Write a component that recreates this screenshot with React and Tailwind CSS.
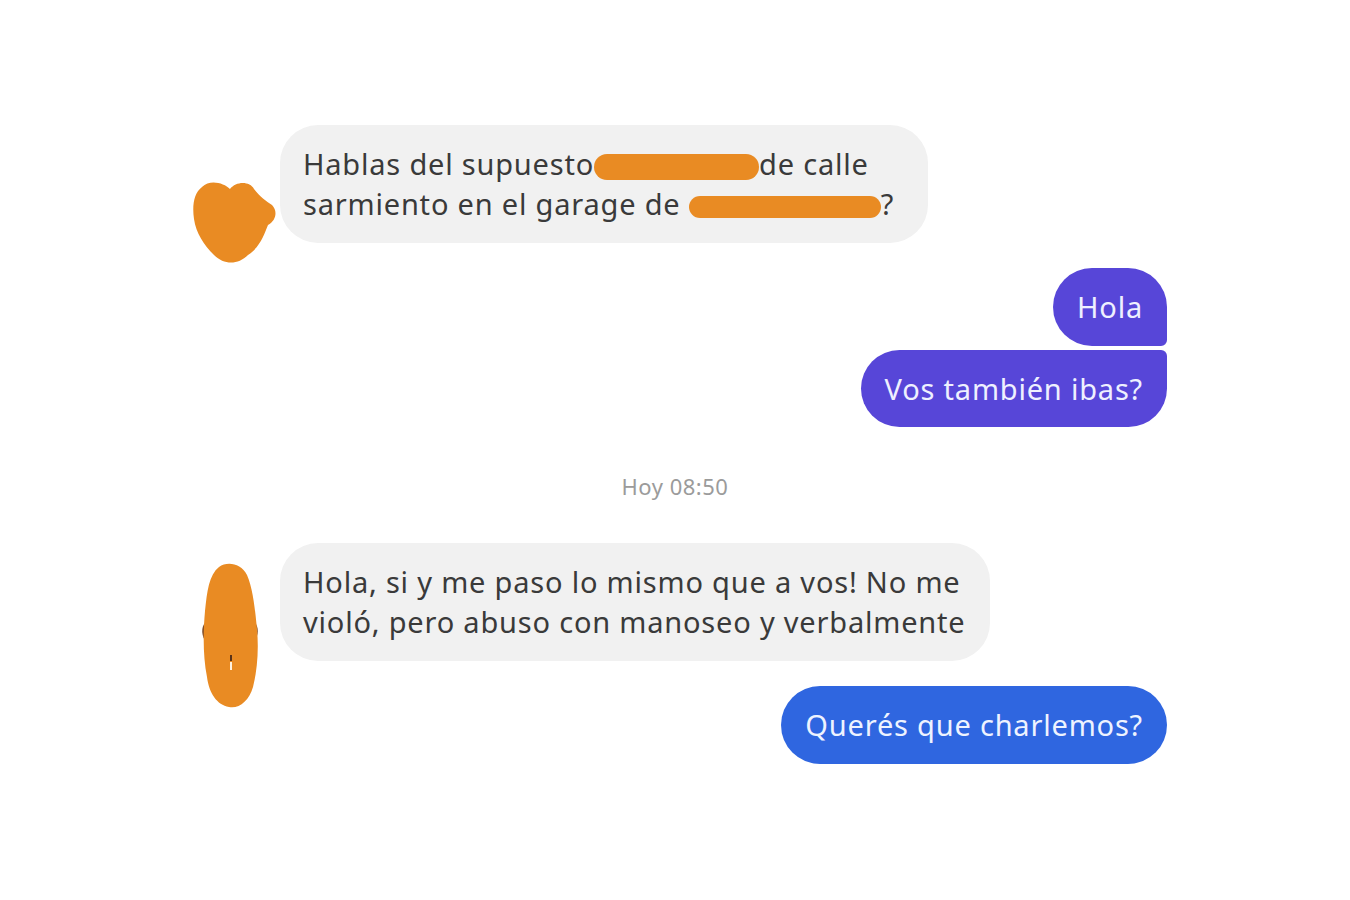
import React from "react";

const orange = "#e98b23";

function BlobA() {
  return (
    <svg width="90" height="90" viewBox="0 0 90 90" className="absolute left-[-3px] top-[50px]">
      <path
        d="M12 12 C20 4 34 8 40 14 C46 6 60 6 64 14 C70 22 76 26 82 30 C88 36 86 46 78 50 C74 60 70 72 58 80 C48 90 34 90 24 80 C14 70 6 58 4 44 C2 30 4 18 12 12 Z"
        fill={orange}
      />
    </svg>
  );
}

function BlobB() {
  return (
    <svg width="64" height="150" viewBox="0 0 64 150" className="absolute left-[6px] top-[18px]">
      <path d="M6 62 C2 66 2 76 8 82 L12 80 L12 60 Z" fill="#7a4a2a" />
      <path d="M56 62 C60 66 60 76 54 82 L50 80 L50 60 Z" fill="#7a4a2a" />
      <path
        d="M20 6 C28 0 42 2 48 14 C54 28 56 48 58 68 C60 90 58 110 54 126 C50 140 40 148 30 146 C18 144 10 132 8 116 C4 96 4 72 6 50 C8 30 10 14 20 6 Z"
        fill={orange}
      />
      <rect x="31" y="94" width="2" height="6" fill="#5a3318" />
      <rect x="31" y="101" width="2" height="8" fill="#fff2e0" />
    </svg>
  );
}

function Redact({ w, h = "h-[26px]" }) {
  return <span className={`inline-block ${w} ${h} rounded-full align-middle bg-[#e98b23] -my-2`} />;
}

export default function App() {
  return (
    <div
      className="min-h-screen w-full bg-white text-[#3a3a3a]"
      style={{ fontFamily: '"Noto Sans", sans-serif' }}
    >
      <div className="ml-[193px] w-[974px] pt-[125px] flex flex-col text-[29px] tracking-[0.8px]">
        {/* incoming 1 */}
        <div className="flex">
          <div className="relative w-[87px] shrink-0">
            <BlobA />
          </div>
          <div className="w-[648px] rounded-[38px] bg-[#f1f1f1] pl-[23px] pr-4 py-[19px] leading-[40px] whitespace-nowrap">
            Hablas del supuesto<Redact w="w-[165px]" />de calle
            <br />
            sarmiento en el garage de <Redact w="w-[192px]" h="h-[22px]" />?
          </div>
        </div>

        {/* outgoing */}
        <div className="mt-[25px] flex flex-col items-end gap-[4px]">
          <div className="h-[78px] flex items-center rounded-t-[39px] rounded-bl-[39px] rounded-br-[6px] bg-[#5746d8] px-[24px] text-[#eef0ff]">
            Hola
          </div>
          <div className="h-[77px] flex items-center rounded-l-[39px] rounded-br-[39px] rounded-tr-[6px] bg-[#5746d8] px-[24px] text-[#eef0ff]">
            Vos también ibas?
          </div>
        </div>

        {/* timestamp */}
        <div className="mt-[46px] pr-[10px] text-center text-[22px] tracking-[0.5px] leading-[26px] text-[#9b9b9b]">Hoy 08:50</div>

        {/* incoming 2 */}
        <div className="mt-[44px] flex">
          <div className="relative w-[87px] shrink-0">
            <BlobB />
          </div>
          <div className="w-[710px] rounded-[38px] bg-[#f1f1f1] pl-[23px] pr-4 py-[19px] leading-[40px] whitespace-nowrap">
            Hola, si y me paso lo mismo que a vos! No me
            <br />
            violó, pero abuso con manoseo y verbalmente
          </div>
        </div>

        {/* outgoing 2 */}
        <div className="mt-[25px] flex justify-end">
          <div className="h-[78px] flex items-center rounded-full bg-[#2f66e0] px-[24px] text-[#eef3ff]">
            Querés que charlemos?
          </div>
        </div>
      </div>
    </div>
  );
}
